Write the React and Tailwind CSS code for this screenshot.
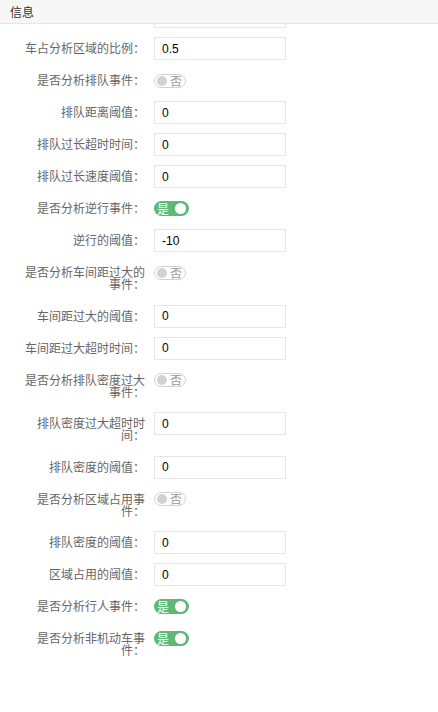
import { useState } from 'react'

const rows = [
  { label: '', type: 'input', value: '' },
  { label: '车占分析区域的比例', type: 'input', value: '0.5' },
  { label: '是否分析排队事件', type: 'switch', value: false },
  { label: '排队距离阈值', type: 'input', value: '0' },
  { label: '排队过长超时时间', type: 'input', value: '0' },
  { label: '排队过长速度阈值', type: 'input', value: '0' },
  { label: '是否分析逆行事件', type: 'switch', value: true },
  { label: '逆行的阈值', type: 'input', value: '-10' },
  { label: '是否分析车间距过大的事件', type: 'switch', value: false },
  { label: '车间距过大的阈值', type: 'input', value: '0' },
  { label: '车间距过大超时时间', type: 'input', value: '0' },
  { label: '是否分析排队密度过大事件', type: 'switch', value: false },
  { label: '排队密度过大超时时间', type: 'input', value: '0' },
  { label: '排队密度的阈值', type: 'input', value: '0' },
  { label: '是否分析区域占用事件', type: 'switch', value: false },
  { label: '排队密度的阈值', type: 'input', value: '0' },
  { label: '区域占用的阈值', type: 'input', value: '0' },
  { label: '是否分析行人事件', type: 'switch', value: true },
  { label: '是否分析非机动车事件', type: 'switch', value: true },
]

function Switch({ initial }) {
  const [on, setOn] = useState(initial)

  if (on) {
    return (
      <button
        onClick={() => setOn(false)}
        className="w-[35px] h-[15px] rounded-full bg-[#5fb878] flex items-center justify-between pl-[3px] pr-[3px]"
      >
        <span className="text-[12px] leading-none text-white">是</span>
        <span className="w-[11px] h-[11px] rounded-full bg-white" />
      </button>
    )
  }

  return (
    <button
      onClick={() => setOn(true)}
      className="w-[32px] h-[14px] rounded-full border border-[#d2d2d2] bg-white flex items-center justify-between pl-[2px] pr-[3px]"
    >
      <span className="w-[10px] h-[10px] rounded-full bg-[#d2d2d2]" />
      <span className="text-[12px] leading-none text-[#999]">否</span>
    </button>
  )
}

export default function App() {
  return (
    <div className="h-[712px] bg-white flex flex-col overflow-hidden font-['Noto_Sans_CJK_SC',sans-serif]">

      {/* Header */}
      <div className="h-[24px] shrink-0 bg-[#f7f7f7] border-b border-[#e6e6e6] flex items-center px-[10px]">
        <span className="text-[12px] text-[#333]">信息</span>
      </div>

      {/* Form (scrolled) */}
      <div className="flex-1 overflow-hidden">
        <div className="-mt-[19px] pl-[24px]">
          {rows.map((row, i) => (
            <div key={i} className="flex items-start mb-[9px]">
              <label className="w-[121px] shrink-0 text-right text-[12px] leading-[12px] pt-[5px] pb-[5.5px] text-[#666]">
                {row.label}{row.label && '：'}
              </label>
              <div className="ml-[9px] h-[23px] flex items-center">
                {row.type === 'input' ? (
                  <input
                    defaultValue={row.value}
                    className="w-[132px] h-[23px] px-[7px] border border-[#e6e6e6] bg-white text-[12px] text-black outline-none font-['Liberation_Sans',sans-serif]"
                  />
                ) : (
                  <Switch initial={row.value} />
                )}
              </div>
            </div>
          ))}
        </div>
      </div>
    </div>
  )
}
